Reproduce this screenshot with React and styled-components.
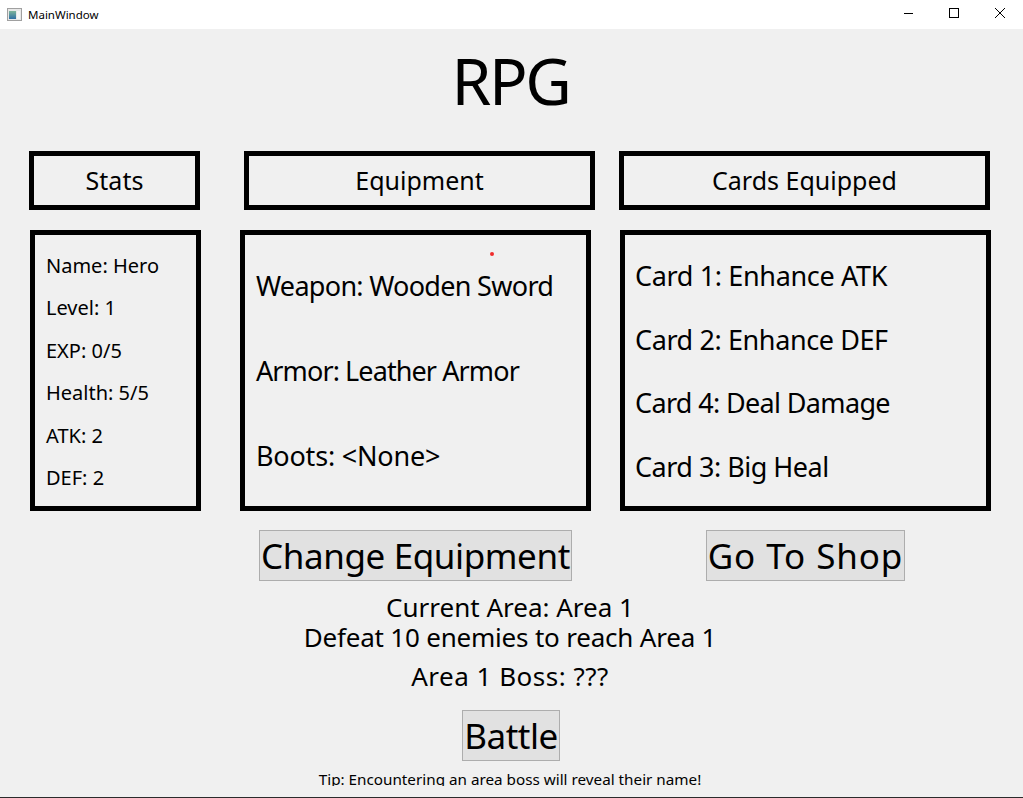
import React from 'react';
import styled, { createGlobalStyle } from 'styled-components';

const FONT = '"Noto Sans", "DejaVu Sans", sans-serif';

const GlobalStyle = createGlobalStyle`
  html, body {
    margin: 0;
    padding: 0;
    background: #f0f0f0;
  }
  body {
    font-family: ${FONT};
    color: #000;
  }
`;

const Window = styled.div`
  width: 1023px;
  height: 798px;
  display: flex;
  flex-direction: column;
  background: #f0f0f0;
  overflow: hidden;
  border-bottom: 1px solid #2b2b2b;
  box-sizing: border-box;
`;

const TitleBar = styled.div`
  height: 29px;
  flex: none;
  display: flex;
  align-items: center;
  background: #fff;
  padding-left: 7px;
`;

const TitleText = styled.span`
  font-size: 11.5px;
  margin-left: 6px;
  margin-top: -1px;
  color: #000;
  flex: 1;
`;

const WinButton = styled.div`
  width: 46px;
  height: 26px;
  align-self: flex-start;
  display: flex;
  align-items: center;
  justify-content: center;
`;

const Title = styled.h1`
  margin: 17px 0 0;
  height: 70px;
  line-height: 70px;
  text-align: center;
  font-size: 64px;
  font-weight: 400;
  letter-spacing: -2.3px;
  padding-right: 2px;
`;

const Row = styled.div`
  display: flex;
  padding-left: ${(p) => p.$left}px;
  margin-top: ${(p) => p.$top}px;
`;

const Box = styled.div`
  box-sizing: border-box;
  width: ${(p) => p.$width}px;
  margin-left: ${(p) => p.$gap || 0}px;
  border: 5px solid #000;
`;

const HeaderBox = styled(Box)`
  height: 59px;
  display: flex;
  align-items: center;
  justify-content: center;
  font-size: 25px;
  padding-bottom: 2px;
`;

const Panel = styled(Box)`
  position: relative;
  height: 281px;
  display: flex;
  flex-direction: column;
  justify-content: space-around;
  padding: ${(p) => p.$pad};
  font-size: ${(p) => p.$size}px;
`;

const Line = styled.div`
  white-space: nowrap;
  letter-spacing: ${(p) => p.$track || 0}px;
`;

const Dot = styled.span`
  position: absolute;
  left: 245px;
  top: 17px;
  width: 4px;
  height: 4px;
  border-radius: 50%;
  background: #f02c2c;
`;

const ActionButton = styled.button`
  box-sizing: border-box;
  width: ${(p) => p.$width}px;
  height: 51px;
  margin-left: ${(p) => p.$gap || 0}px;
  padding: 0;
  background: #e1e1e1;
  border: 1px solid #adadad;
  font-family: ${FONT};
  font-size: 35px;
  letter-spacing: ${(p) => p.$track || 0}px;
  color: #000;
  white-space: nowrap;
  display: flex;
  align-items: center;
  justify-content: center;
`;

const Info = styled.div`
  text-align: center;
  font-size: 26px;
  line-height: 30px;
  letter-spacing: ${(p) => p.$track || 0}px;
  margin-top: ${(p) => p.$top || 0}px;
  padding-right: 3px;
`;

const Center = styled.div`
  display: flex;
  justify-content: center;
  margin-top: 19px;
  padding-right: 1px;
`;

const Tip = styled.div`
  height: 17px;
  margin-top: 8px;
  overflow: hidden;
  text-align: center;
  font-size: 15.25px;
  line-height: 20px;
  padding-right: 3px;
`;

function AppIcon() {
  return (
    <svg width="15" height="13" viewBox="0 0 15 13">
      <defs>
        <linearGradient id="paneFill" x1="0" y1="0" x2="0" y2="1">
          <stop offset="0" stopColor="#7fb59a" />
          <stop offset="1" stopColor="#2f6fa5" />
        </linearGradient>
      </defs>
      <rect x="0.5" y="0.5" width="14" height="12" fill="#e8e8e8" stroke="#a0a0a0" />
      <rect x="2" y="3" width="7" height="8" fill="url(#paneFill)" />
      <rect x="10" y="3" width="3" height="8" fill="#f6f6f6" />
    </svg>
  );
}

export default function App() {
  return (
    <Window>
      <GlobalStyle />
      <TitleBar>
        <AppIcon />
        <TitleText>MainWindow</TitleText>
        <WinButton>
          <svg width="10" height="10" viewBox="0 0 10 10">
            <path d="M1 5.5H10" stroke="#000" />
          </svg>
        </WinButton>
        <WinButton>
          <svg width="10" height="10" viewBox="0 0 10 10">
            <rect x="0.5" y="0.5" width="9" height="9" fill="none" stroke="#000" />
          </svg>
        </WinButton>
        <WinButton>
          <svg width="10" height="10" viewBox="0 0 10 10">
            <path d="M0 0L10 10M10 0L0 10" stroke="#000" />
          </svg>
        </WinButton>
      </TitleBar>

      <Title>RPG</Title>

      <Row $left={29} $top={35}>
        <HeaderBox $width={171}>Stats</HeaderBox>
        <HeaderBox $width={351} $gap={44}>Equipment</HeaderBox>
        <HeaderBox $width={371} $gap={24}>Cards Equipped</HeaderBox>
      </Row>

      <Row $left={30} $top={20}>
        <Panel $width={171} $size={20} $pad="9px 0 7px 11px">
          <Line>Name: Hero</Line>
          <Line>Level: 1</Line>
          <Line>EXP: 0/5</Line>
          <Line>Health: 5/5</Line>
          <Line>ATK: 2</Line>
          <Line>DEF: 2</Line>
        </Panel>
        <Panel $width={351} $gap={39} $size={27} $pad="8px 0 8px 11px">
          <Dot />
          <Line $track={-0.7}>Weapon: Wooden Sword</Line>
          <Line $track={-0.9}>Armor: Leather Armor</Line>
          <Line $track={-0.2}>Boots: &lt;None&gt;</Line>
        </Panel>
        <Panel $width={371} $gap={29} $size={27} $pad="9px 0 8px 10px">
          <Line $track={-0.35}>Card 1: Enhance ATK</Line>
          <Line $track={-0.4}>Card 2: Enhance DEF</Line>
          <Line $track={-0.65}>Card 4: Deal Damage</Line>
          <Line $track={-0.5}>Card 3: Big Heal</Line>
        </Panel>
      </Row>

      <Row $left={259} $top={19}>
        <ActionButton $width={313} $track={-0.4}>Change Equipment</ActionButton>
        <ActionButton $width={199} $gap={134} $track={0.9}>Go To Shop</ActionButton>
      </Row>

      <Info $top={11}>Current Area: Area 1</Info>
      <Info $track={-0.2}>Defeat 10 enemies to reach Area 1</Info>
      <Info $top={9} $track={0.5}>Area 1 Boss: ???</Info>

      <Center>
        <ActionButton $width={98} $track={-0.5}>Battle</ActionButton>
      </Center>

      <Tip>Tip: Encountering an area boss will reveal their name!</Tip>
    </Window>
  );
}
